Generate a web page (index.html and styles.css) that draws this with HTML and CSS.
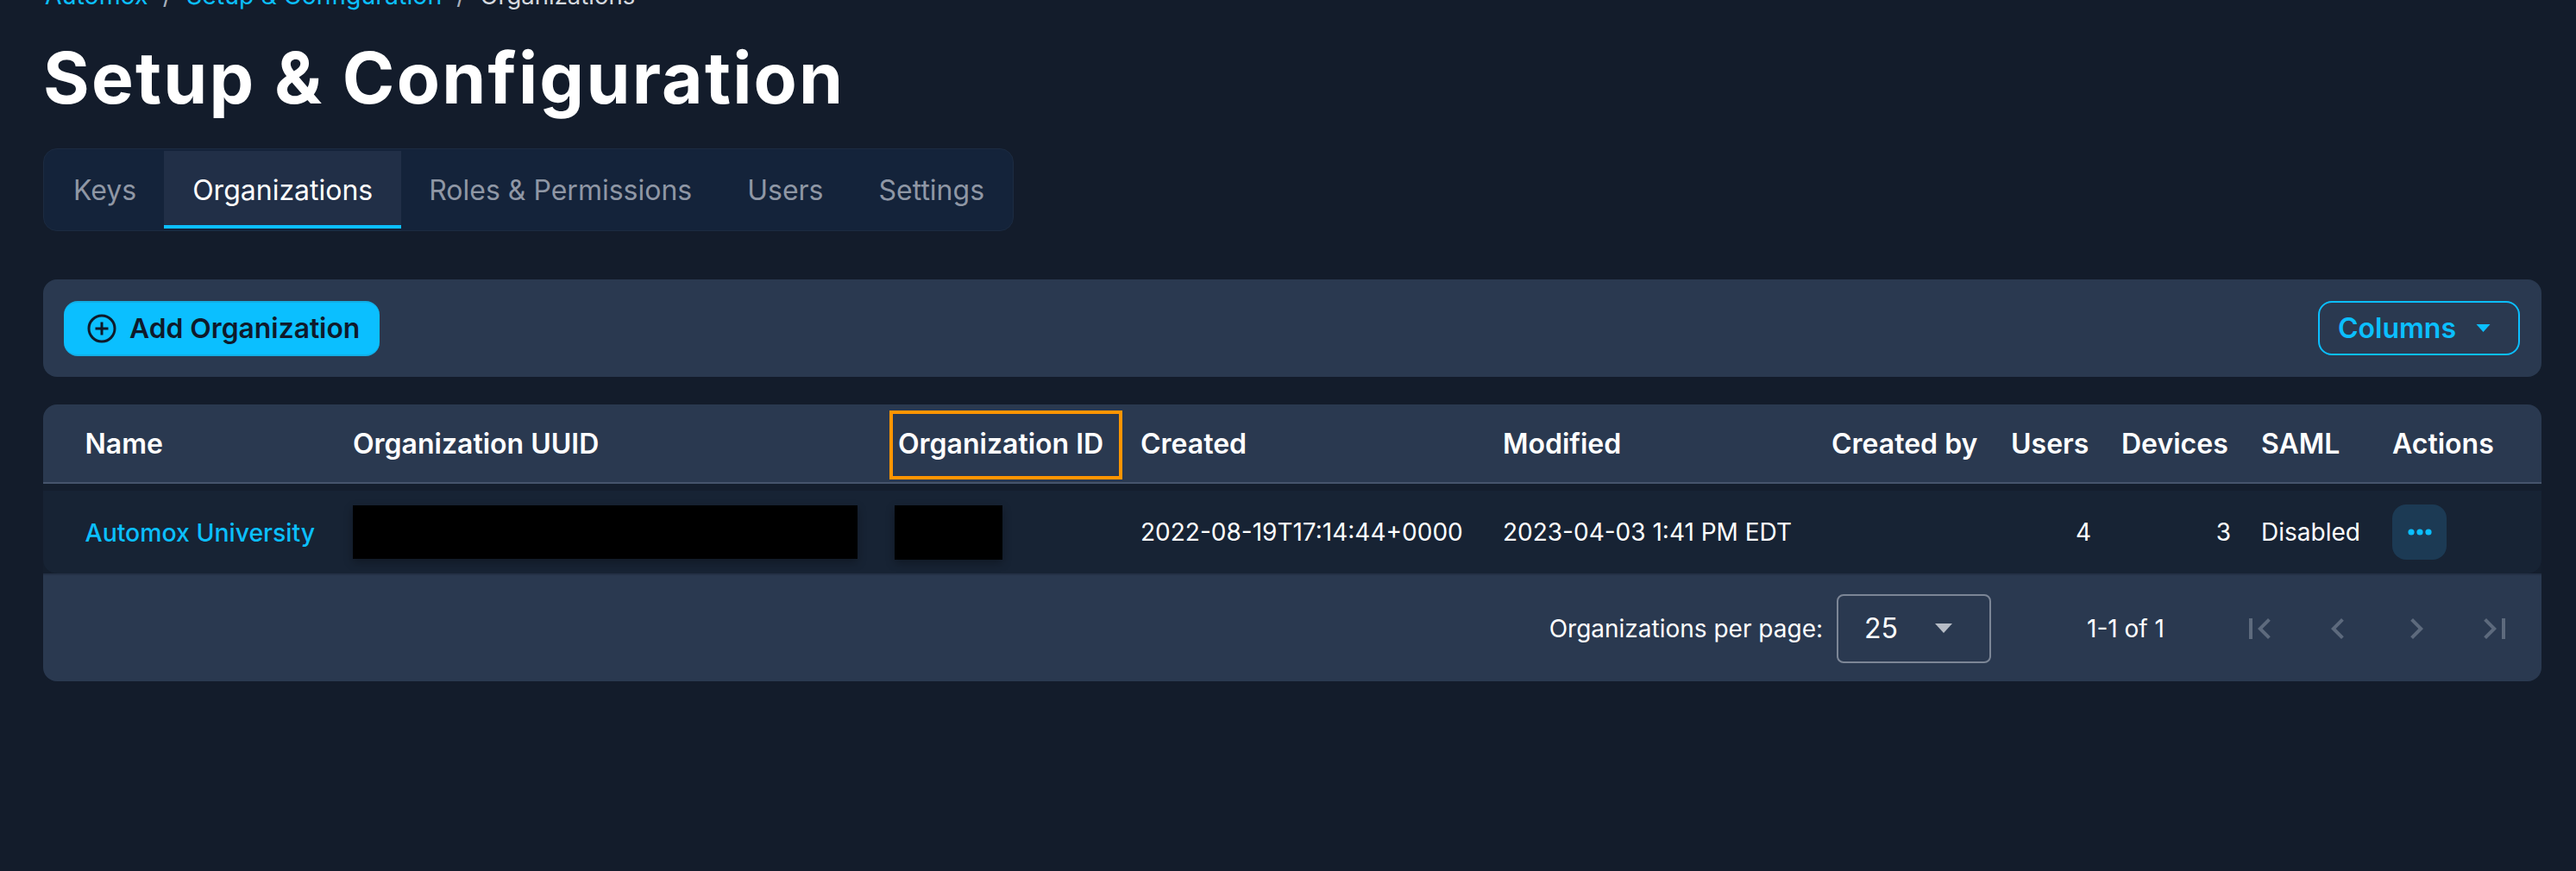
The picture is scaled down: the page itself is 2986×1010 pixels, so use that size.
FILE: index.html
```html
<!DOCTYPE html>
<html lang="en">
<head>
<meta charset="utf-8">
<title>Setup &amp; Configuration</title>
<link rel="stylesheet" href="styles.css">
</head>
<body>
<main class="page">
  <nav class="crumbs"><a>Automox</a><span class="sep">/</span><a>Setup &amp; Configuration</a><span class="sep">/</span><span class="cur">Organizations</span></nav>
  <h1 class="title">Setup &amp; Configuration</h1>
  <div class="tabs">
    <div class="tab">Keys</div>
    <div class="tab active">Organizations</div>
    <div class="tab">Roles &amp; Permissions</div>
    <div class="tab">Users</div>
    <div class="tab">Settings</div>
  </div>
  <section class="toolbar">
    <button class="add">
      <svg class="add-icon" viewBox="0 0 34 34"><circle cx="17" cy="17" r="15" fill="none" stroke="currentColor" stroke-width="3"/><path d="M17 9.5v15M9.5 17h15" fill="none" stroke="currentColor" stroke-width="3"/></svg>
      Add Organization
    </button>
    <button class="columns">Columns
      <svg class="caret-sm" viewBox="0 0 16 9"><path d="M0 0h16L8 9z" fill="currentColor"/></svg>
    </button>
  </section>
  <section class="table">
    <div class="row head">
      <div class="cell first">Name</div>
      <div class="cell">Organization UUID</div>
      <div class="cell orgid"><span class="indent">Organization ID</span><span class="mark"></span></div>
      <div class="cell">Created</div>
      <div class="cell">Modified</div>
      <div class="cell">Created by</div>
      <div class="cell">Users</div>
      <div class="cell">Devices</div>
      <div class="cell">SAML</div>
      <div class="cell">Actions</div>
    </div>
    <div class="body">
      <div class="row data">
        <div class="cell first link">Automox University</div>
        <div class="cell"><div class="redact r-uuid"></div></div>
        <div class="cell"><div class="redact r-id"></div></div>
        <div class="cell">2022-08-19T17:14:44+0000</div>
        <div class="cell">2023-04-03 1:41 PM EDT</div>
        <div class="cell"></div>
        <div class="cell num">4</div>
        <div class="cell num">3</div>
        <div class="cell">Disabled</div>
        <div class="cell"><button class="more"><svg class="dots" viewBox="0 0 28 8"><circle cx="4" cy="4" r="3.6"/><circle cx="14" cy="4" r="3.6"/><circle cx="24" cy="4" r="3.6"/></svg></button></div>
      </div>
    </div>
    <div class="pager">
      <span class="per">Organizations per page:</span>
      <div class="select"><span>25</span><svg class="caret" viewBox="0 0 20 11"><path d="M0 0h20L10 11z" fill="currentColor"/></svg></div>
      <span class="range">1-1 of 1</span>
      <div class="nav">
        <svg viewBox="0 0 24 24"><path d="M18.41 16.59 13.82 12l4.59-4.59L17 6l-6 6 6 6zM6 6h2v12H6z"/></svg>
        <svg viewBox="0 0 24 24"><path d="M15.41 7.41 14 6l-6 6 6 6 1.41-1.41L10.83 12z"/></svg>
        <svg viewBox="0 0 24 24"><path d="M10 6 8.59 7.41 13.17 12l-4.58 4.59L10 18l6-6z"/></svg>
        <svg viewBox="0 0 24 24"><path d="M5.59 7.41 10.18 12l-4.59 4.59L7 18l6-6-6-6zM16 6h2v12h-2z"/></svg>
      </div>
    </div>
  </section>
</main>
</body>
</html>
```
FILE: styles.css
```css
* { box-sizing: border-box; }
html, body { margin: 0; height: 100%; }
body {
  background: #131c2b;
  color: #fff;
  font-family: Inter, "Liberation Sans", sans-serif;
  overflow: hidden;
}
.page { padding: 0 40px 0 50px; height: 1010px; overflow: hidden; }
.crumbs {
  display: flex;
  align-items: center;
  height: 34px;
  margin-top: -22px;
  font-size: 28.5px;
  line-height: 34px;
  padding-left: 2px;
}
.crumbs a { color: #0bbfff; }
.crumbs .sep { color: #a7afbb; margin: 0 17px; }
.crumbs .cur { color: #d5d9df; font-size: 27.5px; }
.title {
  margin: 31px 0 0 0;
  font-size: 82px;
  line-height: 96px;
  font-weight: 700;
  letter-spacing: 2.2px;
  color: #fff;
}
.tabs {
  display: flex;
  width: 1125px;
  height: 96px;
  margin-top: 33px;
  padding: 2px;
  background: #14233a;
  border: 1px solid #1c2b41;
  border-radius: 16px;
}
.tab {
  display: flex;
  flex: none;
  align-items: center;
  padding: 0 32px;
  font-size: 32px;
  white-space: nowrap;
  color: #8f97a5;
}
.tab.active {
  padding: 0 33px;
  color: #fff;
  background: #212f47;
  border-top: 4px solid transparent;
  border-bottom: 4px solid #0bbfff;
}
.toolbar {
  display: flex;
  align-items: center;
  justify-content: space-between;
  height: 113px;
  margin-top: 56px;
  padding: 0 25px 0 24px;
  background: #2a3950;
  border-radius: 16px;
}
button { font-family: inherit; cursor: pointer; }
.add {
  display: flex;
  align-items: center;
  gap: 15px;
  width: 366px;
  height: 64px;
  padding: 0 0 0 27px;
  font-size: 31.8px;
  font-weight: 600;
  color: #0f1a2b;
  background: #0bbfff;
  border: 0;
  border-top: 2px solid #12aee6;
  border-bottom: 2px solid #12aee6;
  border-radius: 16px;
}
.add-icon { width: 34px; height: 34px; }
.columns {
  display: flex;
  align-items: center;
  gap: 23px;
  width: 234px;
  height: 63px;
  padding: 0 0 0 21px;
  font-size: 32px;
  font-weight: 600;
  color: #0bbfff;
  background: transparent;
  border: 2px solid #0bbfff;
  border-radius: 16px;
}
.caret-sm { width: 17px; height: 9px; }
.table {
  margin-top: 32px;
  background: #2a3950;
  border-radius: 16px;
  overflow: hidden;
}
.row {
  display: grid;
  grid-template-columns: 359px 628px 285px 420px 381px 208px 128px 162px 152px 173px;
  align-items: center;
}
.head {
  height: 92px;
  font-size: 32px;
  font-weight: 600;
  border-bottom: 2px solid #46546c;
}
.cell { white-space: nowrap; }
.first { padding-left: 48.5px; }
.orgid { position: relative; }
.indent { padding-left: 4px; }
.mark {
  position: absolute;
  left: -6px;
  top: -19px;
  width: 270px;
  height: 80px;
  border: 4px solid #ff9500;
}
.body { background: #141e2d; padding-top: 8px; }
.data {
  height: 96px;
  font-size: 28px;
  background: #172334;
  border-radius: 0 0 16px 16px;
}
.link { color: #0bbfff; font-size: 28.4px; font-weight: 500; }
.redact { background: #000; height: 62px; box-shadow: 0 4px 10px rgba(0, 0, 0, 0.3); }
.r-uuid { width: 585px; }
.r-id { width: 125px; height: 63px; }
.num { text-align: right; padding-right: 35px; }
.more {
  display: flex;
  align-items: center;
  justify-content: center;
  width: 63px;
  height: 64px;
  padding: 0;
  background: #1c3a54;
  border: 0;
  border-radius: 16px;
}
.dots { width: 28px; height: 8px; fill: #0bbfff; }
.pager {
  display: flex;
  align-items: center;
  justify-content: flex-end;
  height: 125px;
  padding-right: 30px;
  border-top: 2px solid #243146;
  font-size: 28px;
}
.per { margin-right: 16px; }
.select {
  display: flex;
  align-items: center;
  width: 179px;
  height: 80px;
  padding-left: 30px;
  font-size: 32px;
  border: 2px solid #7c8696;
  border-radius: 8px;
}
.caret { width: 20px; height: 11px; margin-left: 43px; color: #b6bcc6; }
.range { margin-left: 111px; }
.nav { display: flex; gap: 43px; margin-left: 86px; }
.nav svg { width: 48px; height: 48px; fill: #5d6a7d; }
```
